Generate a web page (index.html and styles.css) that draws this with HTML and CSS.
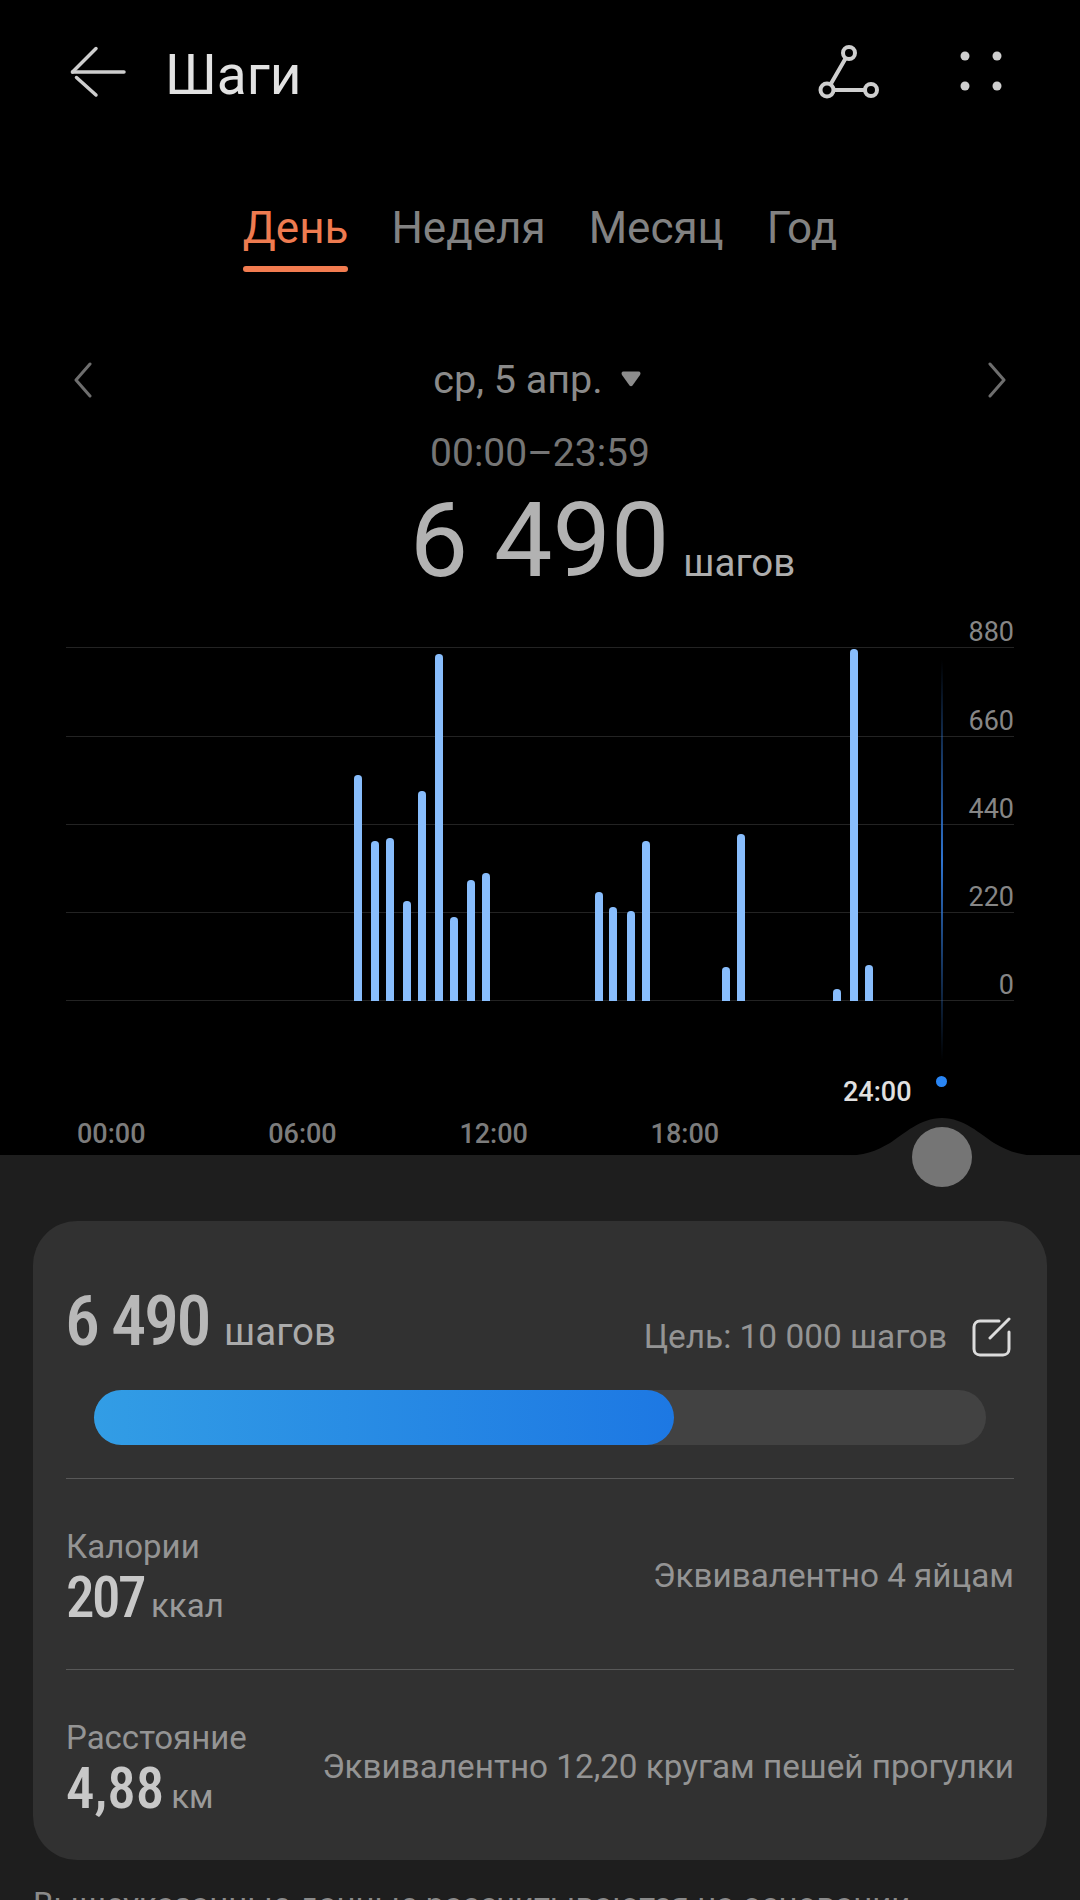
FILE: index.html
```html
<!DOCTYPE html>
<html lang="ru">
<head>
<meta charset="utf-8">
<title>Шаги</title>
<link rel="stylesheet" href="styles.css">
</head>
<body>
<div class="screen">
  <section class="top">
    <header class="appbar">
      <svg class="ico-back" width="60" height="60" viewBox="0 0 60 60" fill="none" stroke="#cecece" stroke-width="3.500" stroke-linecap="round"><path d="M2.500 30H54"/><path d="M26 6.500L2.500 30"/><path d="M6.500 35.500L26 53"/></svg>
      <h1 class="title">Шаги</h1>
      <svg class="ico-share" width="64" height="56" viewBox="0 0 64 56" fill="none" stroke="#cfcfcf" stroke-width="4"><circle cx="32" cy="10" r="6"/><circle cx="10" cy="47" r="6.500"/><circle cx="54" cy="47" r="6"/><path d="M28.500 15.500L13.500 41.500M16.500 47H48"/></svg>
      <svg class="ico-more" width="42" height="40" viewBox="0 0 42 40" fill="#cfcfcf"><circle cx="5" cy="5" r="4.500"/><circle cx="37" cy="5" r="4.500"/><circle cx="5" cy="35" r="4.500"/><circle cx="37" cy="35" r="4.500"/></svg>
    </header>

    <nav class="tabs">
      <span class="tab tab-active">День</span>
      <span class="tab">Неделя</span>
      <span class="tab">Месяц</span>
      <span class="tab">Год</span>
    </nav>

    <div class="datebar">
      <svg width="18" height="36" viewBox="0 0 18 36" fill="none" stroke="#6e6e6e" stroke-width="3" stroke-linecap="round" stroke-linejoin="round"><path d="M16 2L2 18L16 34"/></svg>
      <div class="date">ср, 5 апр.<svg class="caret" width="20" height="16" viewBox="0 0 20 16" fill="#8c8c8c"><path d="M2.500 0.500H17.500C19.500 0.500 20 2.500 19 4L11.500 14.500C10.700 15.600 9.300 15.600 8.500 14.500L1 4C0 2.500 0.500 0.500 2.500 0.500Z"/></svg></div>
      <svg width="18" height="36" viewBox="0 0 18 36" fill="none" stroke="#6e6e6e" stroke-width="3" stroke-linecap="round" stroke-linejoin="round"><path d="M2 2L16 18L2 34"/></svg>
    </div>
    <div class="range">00:00–23:59</div>
    <div class="total"><span class="total-num">6 490</span><span class="total-unit">шагов</span></div>

    <div class="chart">
      <div class="grid-row"><span>880</span></div>
      <div class="grid-row"><span>660</span></div>
      <div class="grid-row"><span>440</span></div>
      <div class="grid-row"><span>220</span></div>
      <div class="grid-row"><span>0</span></div>
      <div class="bars">
        <i class="bar" style="left:288px;height:226px"></i>
        <i class="bar" style="left:305px;height:160px"></i>
        <i class="bar" style="left:320px;height:163px"></i>
        <i class="bar" style="left:337px;height:100px"></i>
        <i class="bar" style="left:352px;height:210px"></i>
        <i class="bar" style="left:369px;height:347px"></i>
        <i class="bar" style="left:384px;height:84px"></i>
        <i class="bar" style="left:401px;height:121px"></i>
        <i class="bar" style="left:416px;height:128px"></i>
        <i class="bar" style="left:529px;height:109px"></i>
        <i class="bar" style="left:543px;height:94px"></i>
        <i class="bar" style="left:561px;height:90px"></i>
        <i class="bar" style="left:576px;height:160px"></i>
        <i class="bar" style="left:656px;height:34px"></i>
        <i class="bar" style="left:671px;height:167px"></i>
        <i class="bar" style="left:767px;height:12px"></i>
        <i class="bar" style="left:784px;height:352px"></i>
        <i class="bar" style="left:799px;height:36px"></i>
      </div>
    </div>

    <div class="cursor-line"></div>
    <div class="cursor-dot"></div>
    <div class="cursor-time">24:00</div>

    <div class="hours">
      <span>00:00</span><span>06:00</span><span>12:00</span><span>18:00</span>
    </div>
  </section>

  <section class="panel">
    <svg class="hump" width="200" height="38" viewBox="0 0 200 38" fill="#1e1e1e"><path d="M0 38C22 38 34 33 48 25C62 16 78 0 100 0C122 0 138 16 152 25C166 33 178 38 200 38Z"/></svg>
    <div class="knob"></div>

    <div class="card">
      <div class="goal-head">
        <div class="goal-val"><span class="num-xl">6 490</span><span class="unit-l">шагов</span></div>
        <div class="goal-right">
          <span class="txt">Цель: 10 000 шагов</span>
          <svg class="ico-edit" width="40" height="40" viewBox="0 0 40 40" fill="none" stroke="#dcdcdc" stroke-width="3" stroke-linecap="round"><path d="M28 4H9C5.500 4 3 6.500 3 10V32C3 35.500 5.500 38 9 38H32C35.500 38 38 35.500 38 32V15"/><path d="M19 21L38 2"/></svg>
        </div>
      </div>
      <div class="track"><div class="fill" style="width:65%"></div></div>

      <div class="row">
        <div class="stat">
          <div class="txt stat-label">Калории</div>
          <div class="stat-val"><span class="num-l num-tight">207</span><span class="unit-m">ккал</span></div>
        </div>
        <div class="txt equiv">Эквивалентно 4 яйцам</div>
      </div>
      <div class="row">
        <div class="stat">
          <div class="txt stat-label">Расстояние</div>
          <div class="stat-val"><span class="num-l">4,88</span><span class="unit-m">км</span></div>
        </div>
        <div class="txt equiv">Эквивалентно 12,20 кругам пешей прогулки</div>
      </div>
    </div>

    <p class="note">Вышеуказанные данные рассчитываются на основании</p>
  </section>
</div>
</body>
</html>
```
FILE: styles.css
```css
* { box-sizing: border-box; }
html, body { margin: 0; padding: 0; background: #000; }
body { font-family: Roboto, "Noto Sans", sans-serif; }

.screen { position: relative; width: 1080px; height: 1900px; overflow: hidden; background: #1e1e1e; }

.top { position: relative; height: 1155px; background: #000; }

.appbar { display: flex; align-items: center; height: 144px; padding: 0 78px 0 70px; }
.ico-back { flex: none; }
.title { flex: 1; margin: 6px 0 0 35px; font-size: 55px; font-weight: 400; color: #e2e2e2; }
.ico-share { flex: none; margin: -2px 79px 0 0; }
.ico-more { flex: none; margin-top: -2px; }

.tabs { display: flex; justify-content: center; gap: 43px; height: 130px; padding-top: 54px; }
.tab { position: relative; height: 60px; font-size: 44px; line-height: 60px; color: #828282; }
.tab-active { color: #ee7b50; }
.tab-active::after { content: ""; position: absolute; left: 0; right: 0; top: 68px; height: 6px; border-radius: 3px; background: #f27c50; }

.datebar { display: flex; justify-content: space-between; align-items: center; height: 48px; margin-top: 82px; padding: 0 74px; }
.date { display: flex; align-items: flex-start; gap: 18px; margin-right: 6px; font-size: 39.500px; line-height: 48px; color: #8a8a8a; }
.caret { margin-top: 15px; }

.range { margin-top: 25px; text-align: center; font-size: 39px; line-height: 48px; color: #757575; }

.total { display: flex; justify-content: center; align-items: baseline; gap: 14px; height: 61px; margin-top: 22px; padding-left: 125px; }
.total-num { font-size: 104px; line-height: 84px; color: #b2b2b2; }
.total-unit { font-size: 38.500px; color: #adadad; }

.chart { position: relative; width: 948px; margin-left: 66px; }
.grid-row { display: flex; justify-content: flex-end; align-items: flex-end; height: 88.25px; border-bottom: 1px solid #232323; font-size: 27px; line-height: 34px; color: #868686; }
.grid-row span { margin-bottom: -2px; }
.bars { position: absolute; left: 0; right: 0; top: 0; bottom: 0; }
.bar { position: absolute; bottom: 0; width: 7.5px; border-radius: 3.75px 3.75px 0 0; background: #88bdfc; }

.cursor-line { position: absolute; left: 941px; top: 660px; width: 2px; height: 400px; background: linear-gradient(180deg, rgba(45,110,200,0), #2f74d0 50%, rgba(45,110,200,0)); }
.cursor-dot { position: absolute; left: 936px; top: 1076px; width: 11px; height: 11px; border-radius: 50%; background: #2a86f5; }
.cursor-time { position: absolute; left: 843px; top: 1076px; font-size: 27px; line-height: 32px; font-weight: 500; color: #e0e0e0; }

.hours { position: absolute; left: 77px; top: 1118px; display: flex; gap: 122.700px; font-size: 27px; line-height: 32px; font-weight: 500; color: #7c7c7c; }

.panel { position: relative; height: 745px; padding: 66px 33px 0; background: #1e1e1e; }
.hump { position: absolute; left: 842px; top: -37px; }
.knob { position: absolute; left: 912px; top: -28px; width: 60px; height: 60px; border-radius: 50%; background: #757575; }

.card { height: 639px; padding: 0 33px; border-radius: 44px; background: #313131; }
.goal-head { display: flex; justify-content: space-between; align-items: flex-end; height: 140px; }
.goal-val { display: flex; align-items: baseline; gap: 15px; margin: 0 0 2px -1px; }
.num-xl, .num-l { display: inline-block; font-stretch: 75%; font-weight: 500; }
.num-xl { font-size: 70px; line-height: 76px; letter-spacing: -2.400px; color: #b8b8b8; }
.num-l { font-size: 57px; line-height: 62px; letter-spacing: 0; color: #c8c8c8; }
.num-tight { letter-spacing: -2.500px; }
.unit-l { font-size: 38.500px; color: #ababab; }
.unit-m { font-size: 33px; color: #9a9a9a; margin-left: 7px; }
.goal-right { display: flex; align-items: center; gap: 24px; margin: 0 3px 4px 0; }
.txt { font-size: 33.400px; line-height: 40px; color: #949494; }
.stat-label { font-size: 33px; }
.ico-edit { flex: none; }
.equiv { margin-top: 3px; font-size: 33.250px; }
.stat { padding-top: 8px; }

.track { height: 55px; margin: 29px 28px 33px 28px; border-radius: 27.5px; background: #424242; }
.fill { height: 55px; border-radius: 27.5px; background: linear-gradient(90deg, #329de5, #1d78e3); }

.row { display: flex; justify-content: space-between; align-items: center; height: 191px; border-top: 1px solid #585858; }
.stat-val { display: flex; align-items: baseline; }

.note { margin: 25px 0 0; font-size: 33px; line-height: 40px; white-space: nowrap; color: #8a8a8a; }
```
